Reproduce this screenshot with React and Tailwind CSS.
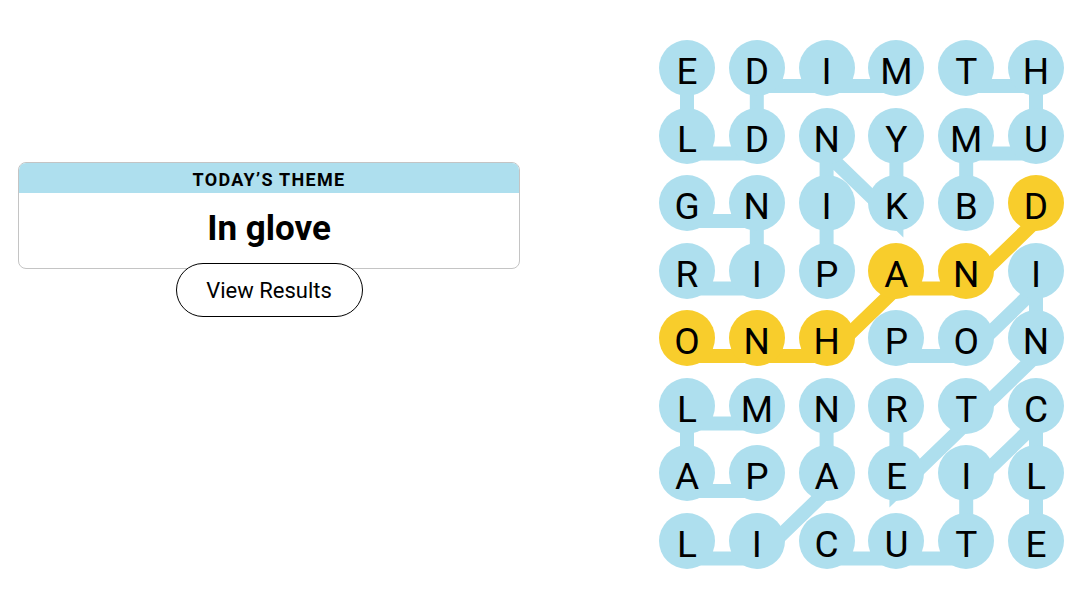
import React from 'react';

const BLUE = '#aedfee';
const YELLOW = '#f8cd2c';

const letters = [
  'EDIMTH',
  'LDNYMU',
  'GNIKBD',
  'RIPANI',
  'ONHPON',
  'LMNRTC',
  'APAEIL',
  'LICUTE',
];

// found words as [row, col] paths, in the order they were traced
const words = [
  { path: [[0, 3], [0, 2], [0, 1], [1, 1], [1, 0], [0, 0]] }, // MIDDLE
  { path: [[0, 4], [0, 5], [1, 5], [1, 4], [2, 4]] }, // THUMB
  { path: [[3, 2], [2, 2], [1, 2], [2, 3], [1, 3]] }, // PINKY
  { path: [[3, 0], [3, 1], [2, 1], [2, 0]] }, // RING
  { path: [[4, 0], [4, 1], [4, 2], [3, 3], [3, 4], [2, 5]], spangram: true }, // ONHAND
  { path: [[4, 3], [4, 4], [3, 5], [4, 5], [5, 4], [6, 3], [5, 3]] }, // POINTER
  { path: [[6, 1], [6, 0], [5, 0], [5, 1]] }, // PALM
  { path: [[5, 2], [6, 2], [7, 1], [7, 0]] }, // NAIL
  { path: [[7, 2], [7, 3], [7, 4], [6, 4], [5, 5], [6, 5], [7, 5]] }, // CUTICLE
];

const spangramCells = new Set(words.filter((w) => w.spangram).flatMap((w) => w.path.map(([r, c]) => `${r}-${c}`)));

const COL = 69.8;
const ROW = 67.5;
const LINE_DROP = 18;

const point = ([r, c]) => `${28 + c * COL},${28 + r * ROW + LINE_DROP}`;

const Board = () => (
  <div className="relative">
    <svg className="absolute left-0 top-0 overflow-visible" width="405" height="528">
      {words.map((w, i) => (
        <polyline
          key={i}
          points={w.path.map(point).join(' ')}
          fill="none"
          stroke={w.spangram ? YELLOW : BLUE}
          strokeWidth="14"
          strokeLinejoin="miter"
          strokeLinecap="butt"
        />
      ))}
    </svg>
    <div className="relative grid grid-cols-[repeat(6,56px)] gap-x-[13.8px] gap-y-[11.5px]">
      {letters.map((row, r) =>
        row.split('').map((ch, c) => (
          <div
            key={`${r}-${c}`}
            className={`w-[56px] h-[56px] rounded-full flex items-center justify-center pt-[7px] text-[37px] leading-none text-black ${
              spangramCells.has(`${r}-${c}`) ? 'bg-[#f8cd2c]' : 'bg-[#aedfee]'
            }`}
          >
            {ch}
          </div>
        ))
      )}
    </div>
  </div>
);

const ThemeCard = () => (
  <div className="w-[502px] flex flex-col items-center">
    <div className="w-full rounded-[8px] border border-[#c4c4c4] overflow-hidden bg-white">
      <div className="h-[30px] bg-[#aedfee] flex items-center justify-center pt-[2px]">
        <span className="text-[18px] font-bold tracking-[1.3px] text-black">TODAY’S THEME</span>
      </div>
      <div className="h-[75px] flex items-center justify-center pb-[2px]">
        <span className="text-[35px] font-bold text-black">In glove</span>
      </div>
    </div>
    <button className="-mt-[6px] w-[187px] h-[54px] rounded-full border border-black bg-white text-[22px] text-black">
      View Results
    </button>
  </div>
);

export default function App() {
  return (
    <div className="min-h-screen bg-white flex items-start font-['Roboto',sans-serif]">
      <div className="ml-[18px] mt-[162px]">
        <ThemeCard />
      </div>
      <div className="ml-[139px] mt-[40px]">
        <Board />
      </div>
    </div>
  );
}
